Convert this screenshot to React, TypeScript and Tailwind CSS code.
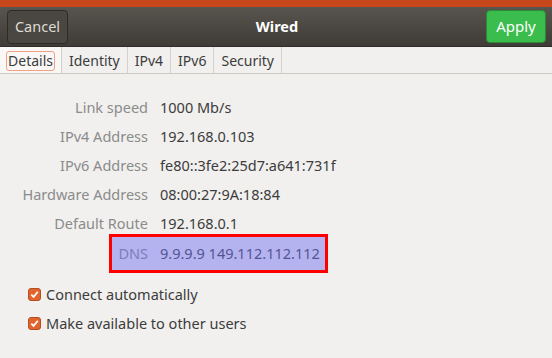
import React from "react";

const rows = [
  { label: "Link speed", value: "1000 Mb/s" },
  { label: "IPv4 Address", value: "192.168.0.103" },
  { label: "IPv6 Address", value: "fe80::3fe2:25d7:a641:731f" },
  { label: "Hardware Address", value: "08:00:27:9A:18:84" },
  { label: "Default Route", value: "192.168.0.1" },
];

const tabs = ["Details", "Identity", "IPv4", "IPv6", "Security"];

function Check({ label }: { label: string }) {
  return (
    <div className="flex items-center h-[29px] pl-[28px]">
      <div className="w-[13px] h-[13px] rounded-[3px] bg-[#e0642c] border border-[#b44d1f] flex items-center justify-center">
        <svg width="9" height="9" viewBox="0 0 9 9">
          <path d="M1.3 4.6 L3.6 6.9 L7.8 1.8" fill="none" stroke="#fff" strokeWidth="1.7" />
        </svg>
      </div>
      <span className="ml-[5px] text-[14.5px] text-[#3c3c3c]">{label}</span>
    </div>
  );
}

export default function App() {
  return (
    <div
      className="w-[552px] h-[358px] bg-[#f1f0ee] flex flex-col overflow-hidden"
      style={{ fontFamily: '"Noto Sans", "DejaVu Sans", sans-serif' }}
    >
      {/* window edge */}
      <div className="h-[7px] bg-[#c8461c]" />

      {/* header bar */}
      <div className="h-[40px] bg-gradient-to-b from-[#58544e] to-[#3f3c37] flex items-center justify-between px-[7px] border-b border-[#2f2d2a]">
        <button className="h-[34px] w-[61px] rounded-[4px] border border-[#2d2b28] bg-[#4a4742] text-[#dfdbd2] text-[14.5px]">
          Cancel
        </button>
        <span className="text-white text-[14.5px] font-bold">Wired</span>
        <button className="h-[33px] w-[60px] rounded-[4px] border border-[#2a8a36] bg-[#3bbd4d] text-white text-[15px] mr-[-1px]">
          Apply
        </button>
      </div>

      {/* tabs */}
      <div className="h-[27px] flex items-stretch border-b border-[#cdc9c3] text-[14px] text-[#3c3c3c]">
        <div className="w-[62px] bg-[#f9f8f7] border-r border-[#d4d0ca] flex items-center justify-center pt-[1px]">
          <span className="px-[1px] h-[20px] leading-[18px] border border-[#f0a17f] rounded-[3px]">Details</span>
        </div>
        {tabs.slice(1).map((t) => (
          <div key={t} className="px-[7px] border-r border-[#d4d0ca] flex items-center pt-[1px]">
            {t}
          </div>
        ))}
      </div>

      {/* details */}
      <div className="pt-[19px] text-[14.5px]">
        {rows.map((r) => (
          <div key={r.label} className="flex items-center h-[29px]">
            <span className="w-[148px] text-right text-[#8b8b8b]">{r.label}</span>
            <span className="ml-[12px] text-[#3c3c3c]">{r.value}</span>
          </div>
        ))}
        <div className="relative flex items-center h-[29px] mt-[1px]">
          <span className="w-[148px] text-right text-[#8b8b8b]">DNS</span>
          <span className="ml-[12px] text-[#3c3c3c]">9.9.9.9 149.112.112.112</span>
          <div className="absolute left-[109px] top-[-5px] w-[219px] h-[39px] border-[3px] border-[#ff0000] bg-[rgba(110,110,240,0.47)] pointer-events-none" />
        </div>
      </div>

      <div className="mt-[12px]">
        <Check label="Connect automatically" />
        <Check label="Make available to other users" />
      </div>
    </div>
  );
}
